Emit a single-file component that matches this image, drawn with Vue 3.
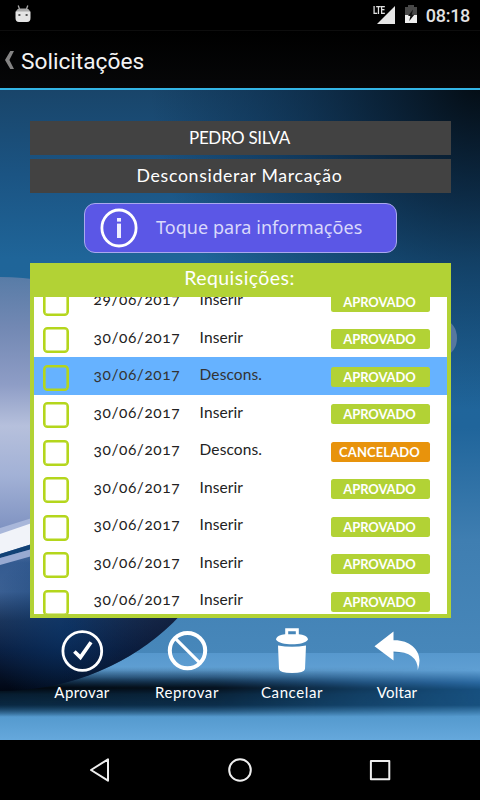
<template>
  <div class="screen">
    <div class="status-bar">
      <svg class="robot" width="16" height="18" viewBox="0 0 16 18">
        <path d="M3.2 0.5L4.5 4M12.8 0.5L11.5 4" stroke="#aaa" stroke-width="1.3" />
        <path d="M1 6.5Q2 3.4 5 3.4H11Q14 3.4 15 6.5V7.5H1Z" fill="#aaa" />
        <path d="M0.5 6.5H15.5V13Q15.5 17 12 17H4Q0.5 17 0.5 13Z" fill="#e4e4e4" />
        <rect x="3.4" y="9" width="2" height="2" fill="#555" />
        <rect x="10.6" y="9" width="2" height="2" fill="#555" />
      </svg>
      <div class="status-right">
        <span class="lte">LTE</span>
        <svg class="signal" width="18" height="18" viewBox="0 0 18 18">
          <path d="M18 0V18H0Z" fill="#e6e6e6" />
        </svg>
        <svg class="battery" width="12" height="18" viewBox="0 0 12 18">
          <path d="M0 2H3V0H9V2H12V10H0Z" fill="#484848" />
          <path d="M0 10H12V18H0Z" fill="#eee" />
          <path d="M8 4.5L3 11H5.3L4.3 16L9.3 9.8H6.8Z" fill="#111" />
        </svg>
        <span class="clock">08:18</span>
      </div>
    </div>

    <div class="title-bar">
      <svg class="back" width="9" height="18" viewBox="0 0 9 18">
        <path d="M5.3 0H9L4.4 9L9 18H5.3L0 9Z" fill="#848484" />
      </svg>
      <h1>Solicitações</h1>
    </div>

    <div class="content">
      <svg class="wallpaper" width="480" height="650" viewBox="0 90 480 650" preserveAspectRatio="none">
        <defs>
          <linearGradient id="sky" x1="0" y1="0" x2="0" y2="1">
            <stop offset="0" stop-color="#19456a" />
            <stop offset="0.15" stop-color="#1b5483" />
            <stop offset="0.3" stop-color="#1f6599" />
            <stop offset="0.6" stop-color="#20659b" />
            <stop offset="0.8" stop-color="#3f7eb1" />
            <stop offset="1" stop-color="#4787ba" />
          </linearGradient>
          <radialGradient id="corner" gradientUnits="userSpaceOnUse" cx="480" cy="80" r="330">
            <stop offset="0" stop-color="#030a10" stop-opacity="0.97" />
            <stop offset="0.35" stop-color="#06182a" stop-opacity="0.72" />
            <stop offset="0.7" stop-color="#082440" stop-opacity="0.38" />
            <stop offset="1" stop-color="#082440" stop-opacity="0" />
          </radialGradient>
          <linearGradient id="floor" x1="0" y1="0" x2="0" y2="1">
            <stop offset="0" stop-color="#5798cd" />
            <stop offset="0.2" stop-color="#5f9fd3" />
            <stop offset="0.34" stop-color="#2a68a0" />
            <stop offset="0.42" stop-color="#17507f" />
            <stop offset="0.6" stop-color="#18517f" />
            <stop offset="0.73" stop-color="#559ace" />
            <stop offset="1" stop-color="#65a8dc" />
          </linearGradient>
          <linearGradient id="shadow" x1="0" y1="0" x2="0" y2="1">
            <stop offset="0" stop-color="#010409" stop-opacity="0" />
            <stop offset="0.2" stop-color="#010409" stop-opacity="0.35" />
            <stop offset="0.42" stop-color="#010409" stop-opacity="0.96" />
            <stop offset="0.55" stop-color="#03101c" stop-opacity="0.8" />
            <stop offset="0.75" stop-color="#041626" stop-opacity="0.7" />
            <stop offset="1" stop-color="#041626" stop-opacity="0" />
          </linearGradient>
          <linearGradient id="fade" x1="0" y1="0" x2="1" y2="0">
            <stop offset="0" stop-color="#fff" />
            <stop offset="0.45" stop-color="#ddd" />
            <stop offset="0.75" stop-color="#555" />
            <stop offset="1" stop-color="#000" />
          </linearGradient>
          <mask id="shadowMask">
            <rect x="0" y="660" width="480" height="60" fill="url(#fade)" />
          </mask>
          <linearGradient id="globe" gradientUnits="userSpaceOnUse" x1="0" y1="277" x2="0" y2="691">
            <stop offset="0" stop-color="#587ca7" />
            <stop offset="0.12" stop-color="#7288b3" />
            <stop offset="0.26" stop-color="#8e9dc6" />
            <stop offset="0.36" stop-color="#b6c0dc" />
            <stop offset="0.48" stop-color="#a2b1d6" />
            <stop offset="0.6" stop-color="#8295c3" />
            <stop offset="0.69" stop-color="#345b91" />
            <stop offset="0.76" stop-color="#3c6194" />
            <stop offset="0.83" stop-color="#1d355a" />
            <stop offset="0.9" stop-color="#0b1f41" />
            <stop offset="1" stop-color="#010714" />
          </linearGradient>
          <radialGradient id="glow" gradientUnits="userSpaceOnUse" cx="70" cy="628" r="85">
            <stop offset="0" stop-color="#07366d" stop-opacity="0.65" />
            <stop offset="1" stop-color="#07366d" stop-opacity="0" />
          </radialGradient>
          <linearGradient id="rim" gradientUnits="userSpaceOnUse" x1="60" y1="0" x2="200" y2="0">
            <stop offset="0" stop-color="#0b1531" stop-opacity="0" />
            <stop offset="1" stop-color="#0b1531" stop-opacity="0.75" />
          </linearGradient>
        </defs>
        <rect x="0" y="90" width="480" height="563" fill="url(#sky)" />
        <rect x="0" y="90" width="480" height="340" fill="url(#corner)" />
        <rect x="0" y="653" width="480" height="87" fill="url(#floor)" />
        <rect x="0" y="667" width="480" height="50" fill="url(#shadow)" mask="url(#shadowMask)" />
        <ellipse cx="445" cy="338" rx="12" ry="17" fill="#56779f" />
        <ellipse cx="0" cy="484" rx="233" ry="207" fill="url(#globe)" />
        <ellipse cx="0" cy="484" rx="233" ry="207" fill="url(#glow)" />
        <ellipse cx="0" cy="484" rx="233" ry="207" fill="url(#rim)" />
        <path d="M0 528L32 518V524L0 536Z" fill="#a9b7da" />
        <path d="M0 534L32 523V544L0 554Z" fill="#f1f3f9" />
        <path d="M0 554L32 544V549L0 558Z" fill="#124276" />
        <path d="M0 558L32 549V556L0 565Z" fill="#98aad2" />
      </svg>

      <div class="field person">PEDRO SILVA</div>
      <div class="field kind">Desconsiderar Marcação</div>

      <button class="info">
        <svg width="38" height="40" viewBox="0 0 38 40">
          <ellipse cx="19" cy="20" rx="17.1" ry="18" fill="none" stroke="#fff" stroke-width="2.8" />
          <rect x="17" y="10" width="4" height="3.6" fill="#eeeeff" />
          <rect x="17" y="15.6" width="4" height="14.4" fill="#eeeeff" />
        </svg>
        <span>Toque para informações</span>
      </button>

      <section class="card">
        <h2>Requisições:</h2>
        <div class="list">
          <div
            v-for="(item, i) in requests"
            :key="i"
            class="row"
            :class="{ selected: item.selected }"
          >
            <span class="check"></span>
            <span class="date">{{ item.date }}</span>
            <span class="type">{{ item.type }}</span>
            <span class="badge" :class="item.status.toLowerCase()">{{ item.status }}</span>
          </div>
        </div>
      </section>

      <div class="actions">
        <div class="action">
          <svg width="48" height="48" viewBox="0 0 48 48">
            <circle cx="24.3" cy="24" r="19.4" fill="none" stroke="#fff" stroke-width="2.8" />
            <path d="M16.4 24.5L22.4 30.3L33 15.3" fill="none" stroke="#fff" stroke-width="3.7" />
          </svg>
          <span class="aprovar">Aprovar</span>
        </div>
        <div class="action">
          <svg width="48" height="48" viewBox="0 0 48 48">
            <circle cx="24.5" cy="23.6" r="17.7" fill="none" stroke="#fff" stroke-width="4" />
            <path d="M12.5 11.6L36.5 35.6" stroke="#fff" stroke-width="3.2" />
          </svg>
          <span class="reprovar">Reprovar</span>
        </div>
        <div class="action">
          <svg width="48" height="48" viewBox="0 0 48 48">
            <path d="M18.7 9V2.7H29.3V9" fill="none" stroke="#fff" stroke-width="3" />
            <path d="M8 12.5C8 9.5 13 7.5 17 7.3H31C35 7.5 40 9.5 40 12.5C38 16 31 17.2 24 17.2C17 17.2 10 16 8 12.5Z" fill="#fff" />
            <path d="M10 18.5Q24 21 38 18.5L37 42Q36.5 46 24 46Q11.5 46 11 42Z" fill="#fff" />
          </svg>
          <span class="cancelar">Cancelar</span>
        </div>
        <div class="action">
          <svg width="48" height="48" viewBox="0 0 48 48">
            <path d="M1.5 19.3L20.5 4.5V13.2C36 12.7 46.5 22 46.5 33.5Q46.5 38 44.8 43Q45 25 20.5 24.5V33.5Z" fill="#fff" />
          </svg>
          <span class="voltar">Voltar</span>
        </div>
      </div>
    </div>

    <div class="nav-bar">
      <svg width="26" height="26" viewBox="0 0 26 26">
        <path d="M4 13L21 2.3V23.7Z" fill="none" stroke="#eee" stroke-width="2" stroke-linejoin="round" />
      </svg>
      <svg width="26" height="26" viewBox="0 0 26 26">
        <circle cx="13" cy="13" r="10.8" fill="none" stroke="#eee" stroke-width="2" />
      </svg>
      <svg width="26" height="26" viewBox="0 0 26 26">
        <rect x="3.9" y="3.9" width="18.4" height="18.4" fill="none" stroke="#eee" stroke-width="2" stroke-linejoin="round" />
      </svg>
    </div>
  </div>
</template>

<script setup>
const requests = [
  { date: '29/06/2017', type: 'Inserir', status: 'APROVADO' },
  { date: '30/06/2017', type: 'Inserir', status: 'APROVADO' },
  { date: '30/06/2017', type: 'Descons.', status: 'APROVADO', selected: true },
  { date: '30/06/2017', type: 'Inserir', status: 'APROVADO' },
  { date: '30/06/2017', type: 'Descons.', status: 'CANCELADO' },
  { date: '30/06/2017', type: 'Inserir', status: 'APROVADO' },
  { date: '30/06/2017', type: 'Inserir', status: 'APROVADO' },
  { date: '30/06/2017', type: 'Inserir', status: 'APROVADO' },
  { date: '30/06/2017', type: 'Inserir', status: 'APROVADO' }
]
</script>

<style>
body {
  margin: 0;
  background: #000;
}
</style>

<style scoped>
* {
  box-sizing: border-box;
}

.screen {
  display: flex;
  flex-direction: column;
  width: 480px;
  height: 800px;
  overflow: hidden;
  background: #000;
  color: #fff;
  font-family: Lato, 'Open Sans', sans-serif;
  white-space: nowrap;
}

svg {
  display: block;
  flex: none;
}

.status-bar {
  height: 31px;
  display: flex;
  justify-content: space-between;
  align-items: flex-start;
  padding: 5px 10px 0 14.5px;
  border-bottom: 1px solid #0d0d0d;
  font-family: Roboto, sans-serif;
}

.status-right {
  display: flex;
  color: #e2e2e2;
}

.signal {
  margin: 1px 10px 0 -7px;
}

.lte {
  font-size: 10px;
  line-height: 12px;
  font-weight: 700;
  letter-spacing: -0.5px;
  transform: scaleX(0.8);
  transform-origin: right;
}

.clock {
  margin-left: 8.5px;
  font-size: 18px;
  line-height: 22px;
  font-weight: 500;
  letter-spacing: -0.3px;
}

.title-bar {
  height: 59px;
  display: flex;
  align-items: center;
  gap: 7px;
  padding-left: 5px;
  border-bottom: 2px solid #33b5e5;
  background: linear-gradient(#000, #060708);
}

.title-bar h1 {
  margin: 0;
  padding-top: 3px;
  font-family: Roboto, sans-serif;
  font-size: 22.7px;
  font-weight: 400;
  color: #f3f3f3;
}

.content {
  position: relative;
  height: 650px;
  padding: 31px 29px 0 30px;
  display: flex;
  flex-direction: column;
}

.wallpaper {
  position: absolute;
  inset: 0;
}

.content > *:not(.wallpaper) {
  position: relative;
}

.field {
  height: 34px;
  margin-bottom: 4px;
  padding-right: 2px;
  background: #424242;
  font-size: 17px;
  line-height: 33px;
  text-align: center;
}

.field.person {
  letter-spacing: -0.35px;
}

.field.kind {
  font-size: 17.7px;
  letter-spacing: 0.68px;
}

.info {
  align-self: center;
  display: flex;
  align-items: center;
  gap: 18px;
  width: 313px;
  height: 50px;
  margin: 6px 0 10px;
  padding: 0 0 2px 15px;
  border: 1.5px solid #aaa9ed;
  border-radius: 11px;
  background: #5b57e6;
  color: #d9d9fb;
  font-family: 'Noto Sans', sans-serif;
  font-size: 18px;
  letter-spacing: 0.05px;
}

.info svg {
  margin-top: 2px;
}

.card {
  height: 355px;
  padding: 0 4px 4px;
  background: #b2d235;
}

.card h2 {
  height: 34px;
  margin: 0;
  padding-right: 2px;
  font-size: 19.5px;
  line-height: 30px;
  font-weight: 400;
  letter-spacing: 0.45px;
  text-align: center;
}

.list {
  height: 317px;
  overflow: hidden;
  background: #fff;
}

.row {
  display: flex;
  align-items: flex-start;
  height: 37.5px;
  color: #222;
  font-size: 15.5px;
}

.row:first-child {
  margin-top: -15px;
}

.row.selected {
  background: #66b2ff;
  color: #333;
}

.check {
  width: 26px;
  height: 26px;
  margin: 7.5px 25px 0 8.6px;
  border: 2px solid #b4d61c;
  border-radius: 4.5px;
  box-shadow: inset 0 0 0 0.6px #b4d61c;
}

.date,
.type {
  line-height: 34px;
  font-variant-numeric: oldstyle-nums;
}

.date {
  width: 106px;
  letter-spacing: 0.55px;
}

.type {
  width: 131.6px;
  letter-spacing: 0.1px;
}

.badge {
  width: 98.6px;
  height: 20px;
  margin-top: 9.8px;
  padding-right: 2px;
  border-radius: 2.5px;
  background: #b2d235;
  color: #fff;
  font-size: 13px;
  line-height: 20px;
  font-weight: 700;
  letter-spacing: -0.1px;
  text-align: center;
}

.badge.cancelado {
  background: #e8930c;
  letter-spacing: 0.1px;
}

.actions {
  display: grid;
  grid-template-columns: repeat(4, 105px);
  padding-top: 9px;
}

.action {
  display: flex;
  flex-direction: column;
  align-items: center;
  margin-left: -1px;
  font-size: 15px;
  line-height: 20px;
}

.action span {
  margin-top: 7px;
}

.action .aprovar {
  letter-spacing: 0.4px;
}

.action .reprovar,
.action .cancelar {
  letter-spacing: 0.6px;
}

.action .voltar {
  letter-spacing: 0.15px;
}

.nav-bar {
  height: 60px;
  display: flex;
  justify-content: center;
  align-items: center;
  gap: 114px;
}
</style>
